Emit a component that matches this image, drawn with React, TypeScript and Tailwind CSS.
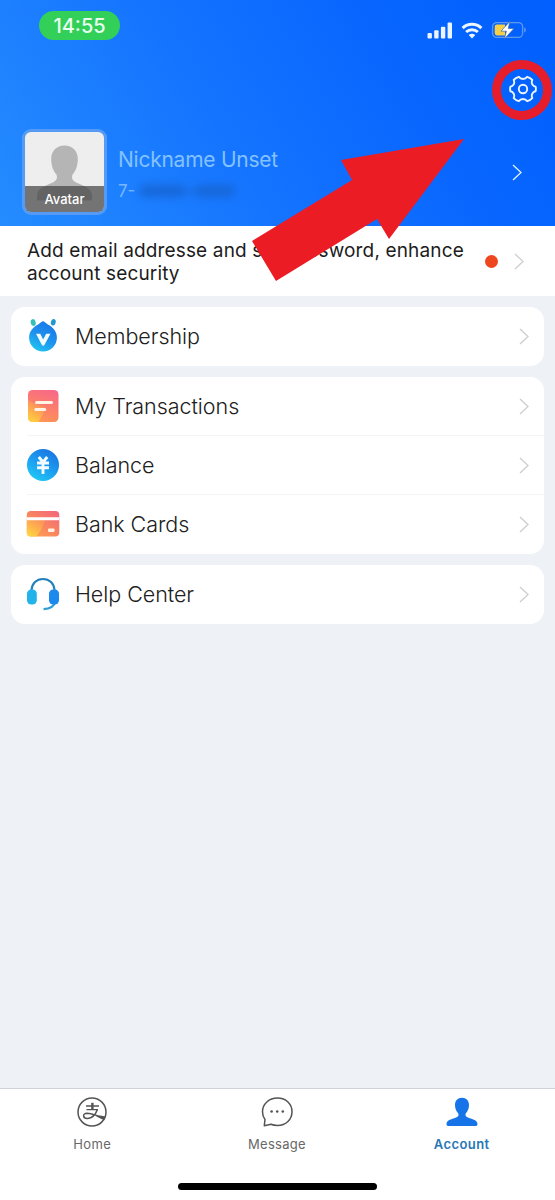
import type { ReactNode } from "react";

function Chevron({ className }: { className: string }) {
  return (
    <svg viewBox="0 0 10 17" className={`h-[17px] w-[10px] shrink-0 ${className}`} fill="none" stroke="currentColor" strokeWidth="1.4">
      <path d="M1 1l8 7.5L1 16" />
    </svg>
  );
}

function SignalIcon() {
  return (
    <svg viewBox="0 0 26 17" className="h-[17px] w-[26px]" fill="#eaf5ff">
      <rect x="0.5" y="11" width="4.4" height="5.5" rx="1" />
      <rect x="7.2" y="8.2" width="4.4" height="8.3" rx="1" />
      <rect x="13.9" y="4.8" width="4.4" height="11.7" rx="1" />
      <rect x="20.6" y="0.6" width="4.4" height="15.9" rx="1" />
    </svg>
  );
}

function WifiIcon() {
  return (
    <svg viewBox="0 0 22 17" className="h-[17px] w-[22px]" fill="none" stroke="#eaf5ff" strokeWidth="3">
      <path d="M1.6 6.1a13.6 13.6 0 0 1 18.8 0" />
      <path d="M5.1 10a8.6 8.6 0 0 1 11.8 0" />
      <path d="M11 16.6l-3.3-3.5a5 5 0 0 1 6.6 0z" fill="#eaf5ff" stroke="none" />
    </svg>
  );
}

function BatteryIcon() {
  return (
    <svg viewBox="0 0 36 20" className="h-5 w-9" fill="none">
      <rect x="1.6" y="2.6" width="30" height="14.8" rx="4.2" stroke="#5f99ee" strokeWidth="1.3" />
      <path d="M33.4 7.6c1.7.6 1.7 4.2 0 4.8z" fill="#7da9e8" />
      <path d="M6 4.6h8v10.8H6a2.3 2.3 0 0 1-2.3-2.3V6.9A2.3 2.3 0 0 1 6 4.6z" fill="#f5cf45" />
      <path d="M18.8 1.4L10 11.2h5.4l-2.1 7.7 9.6-10.4h-5.6z" fill="#fff" stroke="#3d6ca8" strokeWidth="0.7" />
    </svg>
  );
}

function GearIcon() {
  return (
    <svg viewBox="0 0 28 28" className="h-7 w-7" fill="none" stroke="#e9f5ff" strokeWidth="1.9" strokeLinejoin="round">
      <path d="M9.800 1.800C10.800 3.400 12.200 4 14 4s3.200-.6 4.200-2.200c2 .6 3.700 1.600 5.100 3.100-.8 1.800-.7 3.200.1 4.600.8 1.300 1.700 2 3.200 2.200.4 1.600.4 3 0 4.600-1.500.2-2.400.9-3.200 2.200-.8 1.400-.9 2.800-.1 4.600-1.400 1.500-3.100 2.500-5.100 3.100C17.200 24.600 15.800 24 14 24s-3.200.6-4.200 2.200c-2-.6-3.700-1.600-5.100-3.100.8-1.800.7-3.200-.1-4.600-.8-1.300-1.700-2-3.200-2.200-.4-1.600-.4-3 0-4.600 1.500-.2 2.400-.9 3.200-2.200.8-1.400.9-2.800.1-4.600 1.400-1.500 3.100-2.500 5.100-3.100z" />
      <circle cx="14" cy="14" r="4.200" />
    </svg>
  );
}

function MembershipIcon() {
  return (
    <svg viewBox="0 0 34 36" className="h-9 w-[34px]">
      <defs>
        <linearGradient id="member" x1="0.7" y1="0" x2="0.2" y2="1">
          <stop offset="0" stopColor="#1a77e8" />
          <stop offset="0.5" stopColor="#1d91ee" />
          <stop offset="1" stopColor="#22c8f2" />
        </linearGradient>
      </defs>
      <ellipse cx="7.2" cy="4.600" rx="2.5" ry="3.5" fill="#35bfb8" transform="rotate(-12 7.2 4.600)" />
      <ellipse cx="27.300" cy="4.300" rx="2.4" ry="3.3" fill="#2497cf" transform="rotate(12 27.300 4.300)" />
      <path d="M17 3.300c1.300 0 2.300 1.700 4.900 3.300C27 9.300 30.900 13.500 30.900 19.700a13.900 13.700 0 0 1-27.800 0c0-6.200 3.900-10.400 9-13.100C14.700 5 15.700 3.300 17 3.300z" fill="url(#member)" />
      <path d="M10 15.800h4.300l2.800 5.800 3.100-5.800h4.300l-6.100 11.200c-.6 1-1.900 1-2.500 0z" fill="#f2fcff" />
    </svg>
  );
}

function TransactionsIcon() {
  return (
    <svg viewBox="0 0 34 34" className="h-[34px] w-[34px]">
      <defs>
        <linearGradient id="bill" x1="0.7" y1="0" x2="0.35" y2="1">
          <stop offset="0" stopColor="#f7688a" />
          <stop offset="0.55" stopColor="#fc8068" />
          <stop offset="1" stopColor="#ff9a52" />
        </linearGradient>
        <linearGradient id="billGlow" x1="0.1" y1="1" x2="0.6" y2="0">
          <stop offset="0" stopColor="#ffdc3a" />
          <stop offset="1" stopColor="#ffb04a" stopOpacity="0.15" />
        </linearGradient>
        <clipPath id="billClip"><rect x="2" y="1" width="30.500" height="32" rx="4.500" /></clipPath>
      </defs>
      <g clipPath="url(#billClip)">
        <rect width="34" height="34" fill="url(#bill)" />
        <path d="M0 10c7 4 14 7 19 8-1 7-5 12-7 16H0z" fill="url(#billGlow)" />
      </g>
      <path d="M10.500 13.400h15M9.800 20.500h9" stroke="#fff4e6" strokeWidth="3" strokeLinecap="round" />
    </svg>
  );
}

function BalanceIcon() {
  return (
    <svg viewBox="0 0 34 34" className="h-[34px] w-[34px]">
      <defs>
        <linearGradient id="coin" x1="0.8" y1="0" x2="0.2" y2="1">
          <stop offset="0" stopColor="#1b72e0" />
          <stop offset="0.5" stopColor="#1c9cf0" />
          <stop offset="1" stopColor="#20ccf6" />
        </linearGradient>
      </defs>
      <circle cx="17" cy="17" r="16" fill="url(#coin)" />
      <path d="M12.800 9l4.200 5.200L21.200 9M11 15h12M11 19.800h12M17 14.500v11.500" stroke="#f3fdff" strokeWidth="2.900" fill="none" />
    </svg>
  );
}

function CardsIcon() {
  return (
    <svg viewBox="0 0 34 34" className="h-[34px] w-[34px]">
      <defs>
        <linearGradient id="bank" x1="0.9" y1="0.1" x2="0.3" y2="1">
          <stop offset="0" stopColor="#f2667c" />
          <stop offset="0.6" stopColor="#fa8a5c" />
          <stop offset="1" stopColor="#ffa54d" />
        </linearGradient>
        <linearGradient id="bankGlow" x1="0.1" y1="1" x2="0.8" y2="0">
          <stop offset="0" stopColor="#ffdb3e" />
          <stop offset="1" stopColor="#ffab50" stopOpacity="0.4" />
        </linearGradient>
        <clipPath id="bankClip"><rect x="0.800" y="4" width="32.500" height="25.500" rx="4" /></clipPath>
      </defs>
      <g clipPath="url(#bankClip)">
        <rect width="34" height="34" fill="url(#bank)" />
        <path d="M0 13h19c-2 7-5 12-9 17H0z" fill="url(#bankGlow)" />
        <path d="M0 10.200h34v3H0z" fill="#fff" />
      </g>
      <rect x="22" y="21.600" width="6.500" height="3.300" rx="1" fill="#fff2e2" />
    </svg>
  );
}

function HelpIcon() {
  return (
    <svg viewBox="0 0 34 34" className="h-[34px] w-[34px]" fill="none">
      <path d="M5.500 13C6 6.500 10.500 2 17 2s11 4.500 11.500 11" stroke="#2380bd" strokeWidth="2.200" />
      <path d="M29.800 24c-1.500 5-6 8-12.200 8.200" stroke="#2a9ed0" strokeWidth="2.200" />
      <rect x="1" y="12.500" width="9.800" height="15" rx="4.200" fill="#24b2ea" />
      <rect x="23" y="12.500" width="10" height="15" rx="4.200" fill="#1c89ec" />
    </svg>
  );
}

function HomeIcon() {
  return (
    <svg viewBox="0 0 30 30" className="h-[30px] w-[30px]" fill="none" stroke="#545454">
      <circle cx="15" cy="15" r="14" strokeWidth="1.500" />
      <path d="M9 9h13M9.500 12.600h11.500" strokeWidth="1.300" />
      <path d="M15.400 5.800v6.800" strokeWidth="2.400" />
      <path d="M20.400 12.600c-1.500 4.200-5 8.700-9.800 8.900-5 .2-5.500-5.300-.4-5.300 3 .1 5.500 1 8 1.900" strokeWidth="1.500" />
      <path d="M15 16.500c4 1.200 8 2.200 13.700 2.900l-1.500 3.800c-4.500-1.700-8.200-3.700-12.200-6.700z" fill="#545454" stroke="none" />
    </svg>
  );
}

function MessageIcon() {
  return (
    <svg viewBox="0 0 32 30" className="h-[30px] w-8" fill="none" stroke="#545454" strokeWidth="1.500">
      <path d="M16.500 1C25 1 31 7 31 14.700s-6 13.800-14.500 13.800c-2.600 0-4.600-.3-6.500-1.200L3.300 28.700 4 22.500C2.300 20.300 1.500 17.700 1.500 14.700 1.500 7 8 1 16.500 1z" strokeLinejoin="round" />
      <g fill="#545454" stroke="none">
        <circle cx="10.600" cy="14.500" r="1.300" />
        <circle cx="16.200" cy="14.500" r="1.300" />
        <circle cx="21.800" cy="14.500" r="1.300" />
      </g>
    </svg>
  );
}

function AccountIcon() {
  return (
    <svg viewBox="0 0 32 30" className="h-[30px] w-8" fill="#1674e8">
      <path d="M16 .8c4.300 0 7 3 7 7.300 0 3.300-1.300 6.500-3.300 8.300-.7 2 .1 3.200 2.200 4.100 5.200 2 9.600 2.800 9.600 6.600 0 1.200-.5 1.900-1.700 1.900H2.200C1 29 .5 28.300.5 27.100c0-3.800 4.400-4.600 9.600-6.600 2.100-.9 2.900-2.100 2.200-4.100C10.300 14.600 9 11.400 9 8.100c0-4.300 2.700-7.300 7-7.300z" />
    </svg>
  );
}

function Row({ icon, label, divided }: { icon: ReactNode; label: string; divided?: boolean }) {
  return (
    <div className={`flex h-[59px] pl-4 ${divided ? "" : "pb-px"}`}>
      <div className={`flex flex-1 items-center pr-[15px] ${divided ? "border-b border-[#f4f4f5]" : ""}`}>
        <div className="-ml-px flex w-[34px] justify-center">{icon}</div>
        <span className="ml-[15px] flex-1 text-[21.5px] font-light leading-[30px] tracking-[-0.05px] text-[#202020]">{label}</span>
        <Chevron className="text-[#cfcfd2]" />
      </div>
    </div>
  );
}

function Tab({ icon, label, className }: { icon: ReactNode; label: string; className: string }) {
  return (
    <div className="flex flex-1 flex-col items-center pt-2">
      {icon}
      <span className={`mt-2 text-[13px] leading-[18px] ${className}`}>{label}</span>
    </div>
  );
}

export default function App() {
  return (
    <div className="relative flex h-[1200px] w-[555px] flex-col overflow-hidden bg-[#eef2f7] font-['Inter',sans-serif]">
      <header className="flex h-[226px] flex-col bg-[linear-gradient(58deg,#258cff_0%,#1473ff_42%,#0866ff_72%,#005ffe_100%)]">
        <div className="flex h-[60px] items-start justify-between pl-[39px] pr-[28px] pt-[11px]">
          <div className="flex h-[29px] w-[81px] items-center justify-center rounded-full bg-[#32cf59] text-[20px] font-medium text-[#e9ffef]">14:55</div>
          <div className="flex items-center pt-[9px]">
            <SignalIcon />
            <div className="ml-[8px]"><WifiIcon /></div>
            <div className="ml-[8px]"><BatteryIcon /></div>
          </div>
        </div>
        <div className="flex h-[60px] items-start justify-end pr-[3px]">
          <div className="flex h-[60px] w-[60px] items-center justify-center rounded-full border-[9px] border-[#e61e2b]">
            <div className="-mt-[3px] ml-[2px]"><GearIcon /></div>
          </div>
        </div>
        <div className="flex pl-[22px] pr-[33px] pt-[9px]">
          <div className="flex h-[86px] w-[85px] flex-col overflow-hidden rounded-[9px] border-[3px] border-[#559bf5] bg-[#eeeeef]">
            <svg viewBox="0 0 79 80" className="h-20 w-[79px]">
              <path d="M39.500 13.500c8 0 13.300 5.500 13.300 13.300 0 6.700-2 12.500-5.300 15.700-1.500 5 1 7 6 9 8 3.500 13.500 6 13.500 12v5h-55v-5c0-6 5.500-8.500 13.500-12 5-2 7.500-4 6-9-3.300-3.200-5.300-9-5.300-15.700C26.200 19 31.500 13.500 39.500 13.500z" fill="#b5b5b5" />
              <rect y="54" width="79" height="27" fill="#404040" opacity=".7" />
              <text x="39.500" y="72" textAnchor="middle" fill="#fff" fontSize="13" fontWeight="500">Avatar</text>
            </svg>
          </div>
          <div className="ml-[11px] flex-1 pt-[17px]">
            <div className="whitespace-nowrap text-[21px] leading-[28px] tracking-[-0.25px] text-[#83c2ff]">Nickname Unset</div>
            <div className="mt-[5px] flex items-center text-[17px] leading-[24px] text-[#78b7ff]">
              <span>7-</span>
              <div className="ml-1 flex h-[14px] items-center blur-[4px]">
                <div className="h-3 w-[46px] rounded-full bg-[#1767d8]" />
                <div className="h-2 w-[10px] bg-[#1a70e8]" />
                <div className="h-3 w-[40px] rounded-full bg-[#1767d8]" />
              </div>
            </div>
          </div>
          <div className="pt-[35px]"><Chevron className="text-[#d5f0ff]" /></div>
        </div>
      </header>

      <section className="flex h-[70px] items-center bg-white pl-[27px] pr-[31px] pt-px">
        <p className="w-[450px] text-[19px] leading-[23px] tracking-[0.15px] text-[#1c1c1c]">
          Add email addresse and set password, enhance<br />account security
        </p>
        <div className="ml-[8px] h-[13px] w-[13px] rounded-full bg-[#ee461f]" />
        <div className="ml-auto"><Chevron className="text-[#d0d0d3]" /></div>
      </section>

      <main className="flex flex-1 flex-col gap-[11px] px-[11px] pt-[11px]">
        <section className="rounded-[14px] bg-white">
          <Row icon={<MembershipIcon />} label="Membership" />
        </section>
        <section className="rounded-[14px] bg-white">
          <Row icon={<TransactionsIcon />} label="My Transactions" divided />
          <Row icon={<BalanceIcon />} label="Balance" divided />
          <Row icon={<CardsIcon />} label="Bank Cards" />
        </section>
        <section className="rounded-[14px] bg-white">
          <Row icon={<HelpIcon />} label="Help Center" />
        </section>
      </main>

      <footer className="flex h-[112px] flex-col border-t border-[#cfd3d7] bg-white">
        <nav className="flex h-[94px] pr-px">
          <Tab icon={<HomeIcon />} label="Home" className="tracking-[0.4px] text-[#686868]" />
          <Tab icon={<MessageIcon />} label="Message" className="tracking-[0.3px] text-[#686868]" />
          <Tab icon={<AccountIcon />} label="Account" className="font-semibold tracking-[0.4px] text-[#2777b6]" />
        </nav>
        <div className="h-[7px] w-[199px] self-center rounded-full bg-black" />
      </footer>

      <svg viewBox="0 0 212 142" className="absolute left-[252px] top-[139px] h-[142px] w-[212px]">
        <path d="M0 102L100 41 89 21 212 0 137 100 125 80 24 142z" fill="#eb1c24" />
      </svg>
    </div>
  );
}
